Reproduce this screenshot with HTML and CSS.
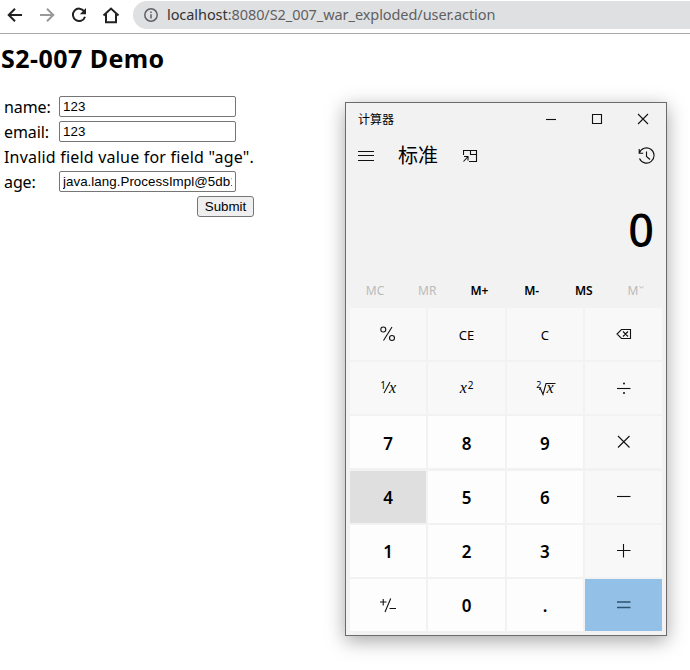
FILE: index.html
```html
<!DOCTYPE html>
<html lang="zh-CN">
<head>
<meta charset="utf-8">
<title>S2-007 Demo</title>
<link rel="stylesheet" href="styles.css">
</head>
<body>
<header class="toolbar">
  <svg class="nav" width="20" height="20" viewBox="0 0 20 20"><path d="M17 10H4M10 3.7L3.7 10l6.3 6.3"/></svg>
  <svg class="nav nav-off" width="20" height="20" viewBox="0 0 20 20"><path d="M3 10h13M10 3.7l6.3 6.3-6.3 6.3"/></svg>
  <svg class="nav" width="20" height="20" viewBox="0 0 20 20"><path d="M15.2 6.3A6.2 6.2 0 1 0 16 11.7"/><path class="solid" d="M17 3v6.2h-6.2z"/></svg>
  <svg class="nav" width="20" height="20" viewBox="0 0 20 20"><path d="M2.5 10.6L10 3.6l7.5 7M5 9v8.2h10V9"/></svg>
  <div class="address">
    <svg class="info" width="14" height="14" viewBox="0 0 14 14"><circle cx="7" cy="7" r="6.2"/><path d="M7 6.2v4.3M7 3.5v1.5"/></svg>
    <span class="url"><span class="host">localhost</span>:8080/S2_007_war_exploded/user.action</span>
  </div>
</header>
<main class="page">
  <h1>S2-007 Demo</h1>
  <form class="form">
    <label class="label" for="name">name:</label><input id="name" class="field" type="text" value="123">
    <label class="label" for="email">email:</label><input id="email" class="field" type="text" value="123">
    <p class="error">Invalid field value for field "age".</p>
    <label class="label" for="age">age:</label><input id="age" class="field" type="text" value="java.lang.ProcessImpl@5db1a0">
    <button class="submit" type="button">Submit</button>
  </form>
</main>

<section class="calc">
  <div class="titlebar">
    <span class="title">计算器</span>
    <svg class="cap" width="46" height="32" viewBox="0 0 46 32"><path d="M18 16.5h10"/></svg>
    <svg class="cap" width="46" height="32" viewBox="0 0 46 32"><path d="M18.5 11.5h9v9h-9z"/></svg>
    <svg class="cap" width="46" height="32" viewBox="0 0 46 32"><path d="M18 11l10 10M28 11L18 21"/></svg>
  </div>
  <div class="modebar">
    <svg class="line" width="16" height="16" viewBox="0 0 16 16"><path d="M0 3.5h16M0 7.5h16M0 12.5h16"/></svg>
    <span class="mode">标准</span>
    <svg class="line" width="15" height="14" viewBox="0 0 15 14"><path d="M3 1.500H13.500v11H6M.5 6V1.500H3M7.500 1.500v4h6M.5 12.500l4.500-5M1 7.500h4v4"/></svg>
    <svg class="line history" width="18" height="18" viewBox="0 0 18 18"><path d="M1.300 6A7.600 7.600 0 1 1 1.500 11.500M1.200 2v4.300h4M8.500 4.500v5l3.500 3"/></svg>
  </div>
  <output class="display">0</output>
  <div class="memory">
    <span class="off">MC</span><span class="off">MR</span><span>M+</span><span>M-</span><span>MS</span><span class="off menu">M<svg class="caret" width="5" height="3" viewBox="0 0 5 3"><path d="M.5 .5l2 1.500 2-1.500"/></svg></span>
  </div>
  <div class="keys">
    <div class="key"><svg class="line" width="16" height="16" viewBox="0 0 16 16"><circle cx="3.300" cy="3.500" r="2.500"/><circle cx="12" cy="12" r="2.500"/><path d="M12 1L3.500 14.500"/></svg></div>
    <div class="key text">CE</div>
    <div class="key text">C</div>
    <div class="key"><svg class="line" width="16" height="14" viewBox="0 0 16 14"><path d="M5.500 2.500h9v9h-9L1 7zM7 4.500l5 5M12 4.500l-5 5"/></svg></div>

    <div class="key"><span class="frac"><span class="one">1</span><svg class="line slash" width="8" height="14" viewBox="0 0 8 14"><path d="M7 1L1 12"/></svg><i>x</i></span></div>
    <div class="key"><span class="power"><i>x</i><span class="exp">2</span></span></div>
    <div class="key"><span class="root"><span class="index">2</span><svg class="line radical" width="17" height="15" viewBox="0 0 17 15"><path d="M0 8.500l1.500-1L4 13.500 7 2.500h9.500"/></svg><i class="radicand">x</i></span></div>
    <div class="key"><svg class="line" width="14" height="14" viewBox="0 0 14 14"><path d="M0 7.500h13.500"/><circle class="dot" cx="7" cy="2.500" r="1"/><circle class="dot" cx="7" cy="12" r="1"/></svg></div>

    <div class="key num">7</div>
    <div class="key num">8</div>
    <div class="key num">9</div>
    <div class="key"><svg class="line" width="14" height="14" viewBox="0 0 14 14"><path d="M1 1l11.500 11.500M12.500 1L1 12.500"/></svg></div>

    <div class="key num pressed">4</div>
    <div class="key num">5</div>
    <div class="key num">6</div>
    <div class="key"><svg class="line" width="14" height="14" viewBox="0 0 14 14"><path d="M0 6.500h13.500"/></svg></div>

    <div class="key num">1</div>
    <div class="key num">2</div>
    <div class="key num">3</div>
    <div class="key"><svg class="line" width="14" height="14" viewBox="0 0 14 14"><path d="M0 6.500h13.500M6.500 0v13.500"/></svg></div>

    <div class="key num sign"><svg class="line" width="18" height="16" viewBox="0 0 18 16"><path d="M1 5h6.500M4.200 2v6.500M11.700 1.500L6 15M10.500 11.500H17"/></svg></div>
    <div class="key num">0</div>
    <div class="key num">.</div>
    <div class="key equals"><svg class="line" width="14" height="14" viewBox="0 0 14 14"><path d="M0 4h13.500M0 9.500h13.500"/></svg></div>
  </div>
</section>
</body>
</html>
```
FILE: styles.css
```css
* { box-sizing: border-box; }
body {
  margin: 0;
  height: 670px;
  overflow: hidden;
  background: #fff;
  color: #000;
  font-family: "Noto Sans", "Noto Sans CJK SC", sans-serif;
}
svg { display: block; flex: none; }

.toolbar {
  display: flex;
  align-items: flex-start;
  gap: 12px;
  height: 34px;
  padding: 1px 0 0 5px;
  border-bottom: 1px solid #a9a9aa;
}
.nav { margin-top: 4px; fill: none; stroke: #222; stroke-width: 2; }
.nav-off { stroke: #999; }
.solid { fill: #222; stroke: none; }
.address {
  flex: 1;
  display: flex;
  align-items: center;
  height: 28px;
  padding-left: 11px;
  border-radius: 14px 0 0 14px;
  background: #dfe0e2;
}
.info { fill: none; stroke: #5f6063; stroke-width: 1.5; }
.url {
  margin: -2px 0 0 9px;
  font-size: 14.5px;
  line-height: 28px;
  letter-spacing: -.07px;
  color: #5f6063;
  white-space: nowrap;
}
.host { color: #333; }

.page { padding-left: 1px; }
h1 {
  margin: 0;
  padding-top: 7px;
  font-size: 25px;
  line-height: 34px;
  font-weight: 700;
  letter-spacing: .45px;
}
.form {
  display: grid;
  grid-template-columns: 55px 195px;
  grid-template-rows: repeat(5, 21px);
  row-gap: 4px;
  margin: 21px 0 0 3px;
  font-size: 16px;
  line-height: 22px;
}
.label { letter-spacing: -.1px; }
.error { grid-column: span 2; margin: 0; letter-spacing: .2px; white-space: nowrap; }
.field {
  width: 177px;
  height: 21px;
  padding: 1px 3px;
  border: 1px solid #767676;
  border-radius: 2px;
  background: #fff;
  font: 13.333px "Liberation Sans", sans-serif;
  letter-spacing: .04px;
  color: #000;
}
.submit {
  grid-column: 2;
  justify-self: end;
  width: 57px;
  height: 21px;
  padding: 0;
  border: 1px solid #767676;
  border-radius: 3px;
  background: #efefef;
  font: 13.333px "Liberation Sans", sans-serif;
  color: #000;
}

.calc {
  position: absolute;
  left: 345px;
  top: 102px;
  width: 322px;
  height: 534px;
  border: 1px solid #6b6b6b;
  background: #f2f2f2;
  box-shadow: 0 5px 18px rgba(0, 0, 0, .35);
}
.line, .cap { fill: none; stroke: #111; stroke-width: 1.1; }
.titlebar { display: flex; align-items: center; height: 32px; }
.title { flex: 1; padding-left: 12px; font-size: 12px; }
.modebar { display: flex; align-items: center; height: 42px; padding: 0 10px 0 12px; }
.mode { margin: 0 25px 0 24px; font-size: 20px; line-height: 30px; }
.history { margin-left: auto; }
.display {
  display: block;
  height: 100px;
  padding-right: 12px;
  text-align: right;
  font-size: 45px;
  line-height: 105px;
  font-weight: 500;
}
.memory {
  display: grid;
  grid-template-columns: repeat(6, 52.2px);
  height: 31px;
  padding-left: 3px;
  text-align: center;
  font-size: 12px;
  line-height: 27px;
  font-weight: 600;
}
.off { color: #bbb; font-weight: 400; }
.menu { display: flex; justify-content: center; }
.caret { margin: 9px 0 0 1px; fill: none; stroke: #bbb; }
.keys {
  display: grid;
  grid-template-columns: repeat(3, 76.4px) 77px;
  grid-template-rows: repeat(6, 52px);
  gap: 2.2px 2px;
  margin-left: 4px;
}
.key {
  display: flex;
  align-items: center;
  justify-content: center;
  background: #f8f8f8;
}
.text { padding-top: 2px; font-size: 13px; }
.num { padding-top: 2px; background: #fdfdfd; font-size: 17px; font-weight: 600; }
.sign { padding-top: 0; }
.pressed { background: #dfdfdf; }
.equals { background: #92c0e6; }
.equals .line { stroke: #31526e; stroke-width: 1.5; }
.dot { fill: #111; stroke: none; }
i { font: italic 16px/16px "Liberation Serif", serif; }
.frac, .power, .root { display: flex; align-items: center; }
.one { margin: -6px -3px 0 0; font-size: 10px; line-height: 14px; }
.slash { margin-right: -2px; }
.exp { margin: -7px 0 0 1px; font-size: 10px; line-height: 14px; }
.index { margin: -6px -3px 0 0; font-size: 9px; line-height: 14px; }
.radicand { margin-left: -9px; }
```
